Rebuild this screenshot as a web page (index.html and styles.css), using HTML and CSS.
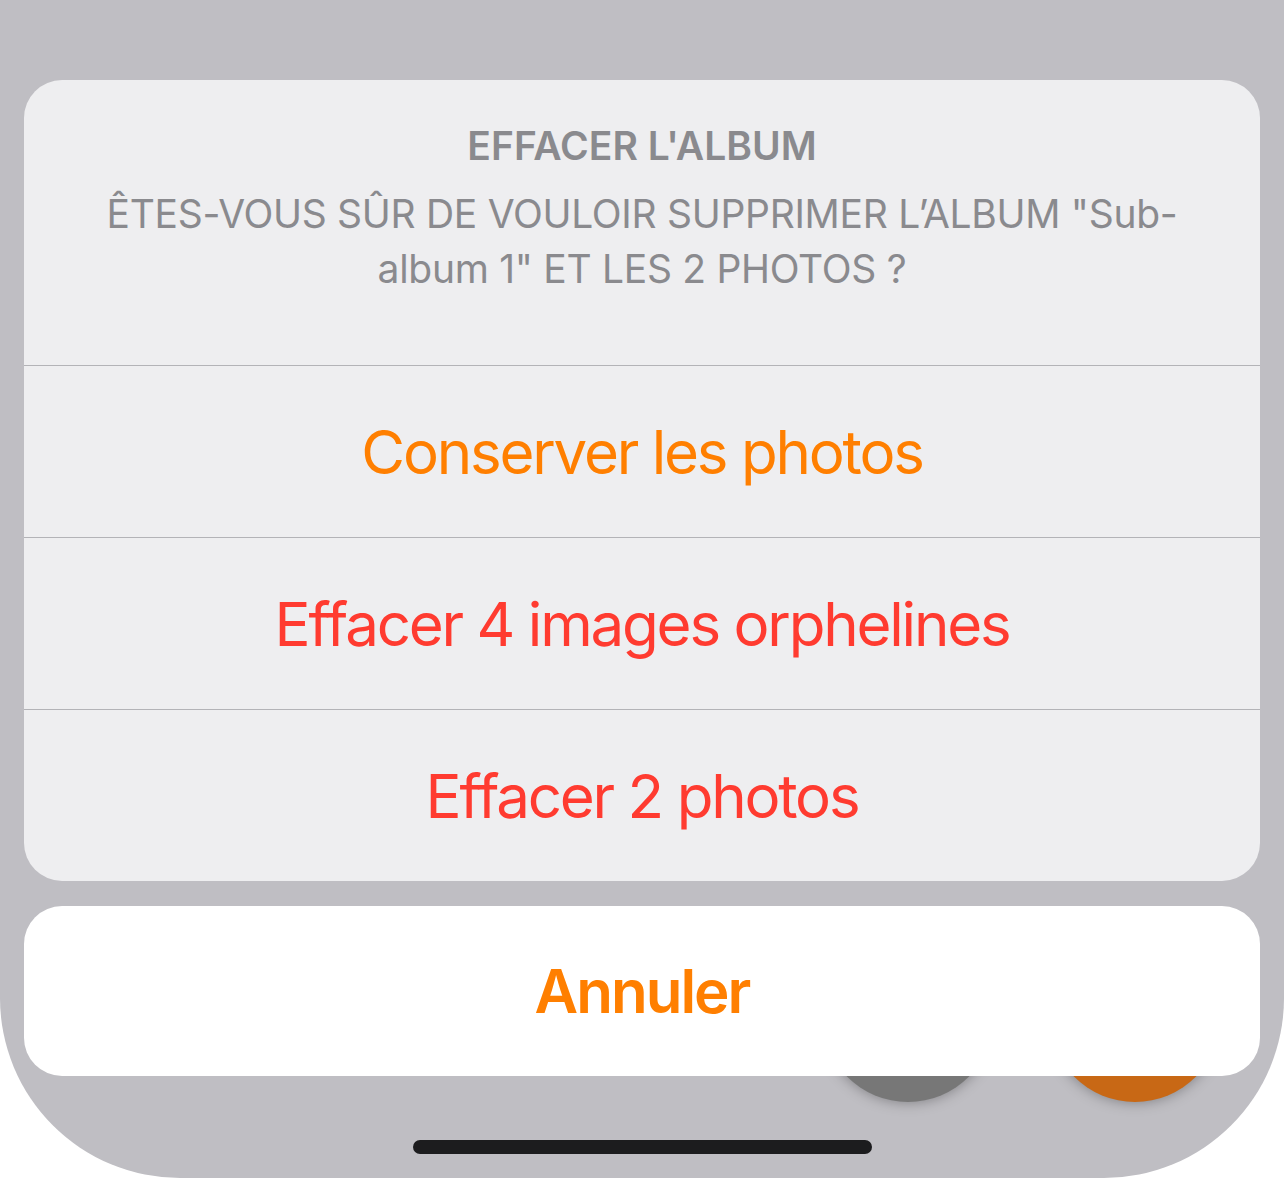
FILE: index.html
```html
<!DOCTYPE html>
<html lang="fr">
<head>
  <meta charset="UTF-8">
  <title>Effacer l'album</title>
  <link rel="stylesheet" href="styles.css">
</head>
<body>

<div class="screen">
  <div class="fab fab-gray"></div>
  <div class="fab fab-orange"></div>

  <div class="sheet">
    <div class="group">
      <div class="header">
        <div class="title">EFFACER L'ALBUM</div>
        <div class="message">ÊTES-VOUS SÛR DE VOULOIR SUPPRIMER L’ALBUM "Sub-<br>album 1" ET LES 2 PHOTOS ?</div>
      </div>
      <button class="action">Conserver les photos</button>
      <button class="action destructive">Effacer 4 images orphelines</button>
      <button class="action destructive">Effacer 2 photos</button>
    </div>
    <button class="cancel">Annuler</button>
  </div>

  <div class="home-indicator"></div>
</div>

</body>
</html>
```

FILE: styles.css
```css
body {
  margin: 0;
  background: #fff;
  font-family: Inter, 'Noto Sans', sans-serif;
  font-variant-ligatures: none;
}

.screen {
  position: relative;
  width: 1284px;
  height: 1178px;
  background: #bfbec3;
  border-radius: 0 0 180px 180px;
  overflow: hidden;
  display: flex;
  flex-direction: column;
}

/* app buttons sitting behind the sheet */
.fab {
  position: absolute;
  width: 172px;
  height: 172px;
  border-radius: 50%;
  top: 930px;
  box-shadow: 0 0 14px rgba(0,0,0,0.35);
}

.fab-gray {
  left: 822px;
  background: #777777;
}

.fab-orange {
  left: 1049px;
  background: #c86815;
}

.sheet {
  position: relative;
  padding: 80px 24px 0;
  display: flex;
  flex-direction: column;
  gap: 25px;
}

.group {
  background: #eeeef0;
  border-radius: 38px;
  overflow: hidden;
  display: flex;
  flex-direction: column;
}

.header {
  padding: 42px 48px 69px;
  text-align: center;
  color: #8a8a8e;
}

.title {
  font-size: 39px;
  font-weight: 600;
  line-height: 48px;
}

.message {
  margin-top: 16px;
  font-size: 39px;
  line-height: 55px;
  letter-spacing: -0.3px;
}

button {
  font-family: inherit;
  font-variant-ligatures: none;
  border: none;
  background: none;
  padding: 0;
  cursor: pointer;
}

.action {
  height: 172px;
  border-top: 1px solid #b3b3b7;
  font-size: 60px;
  letter-spacing: -2.2px;
  color: #ff7f00;
}

.destructive {
  color: #ff3b30;
}

.cancel {
  height: 170px;
  background: #fff;
  border-radius: 38px;
  font-size: 60px;
  font-weight: 600;
  letter-spacing: -2px;
  color: #ff7f00;
}

.home-indicator {
  position: relative;
  width: 459px;
  height: 14px;
  border-radius: 7px;
  background: #1c1c1e;
  margin: 64px auto 0;
}
```
